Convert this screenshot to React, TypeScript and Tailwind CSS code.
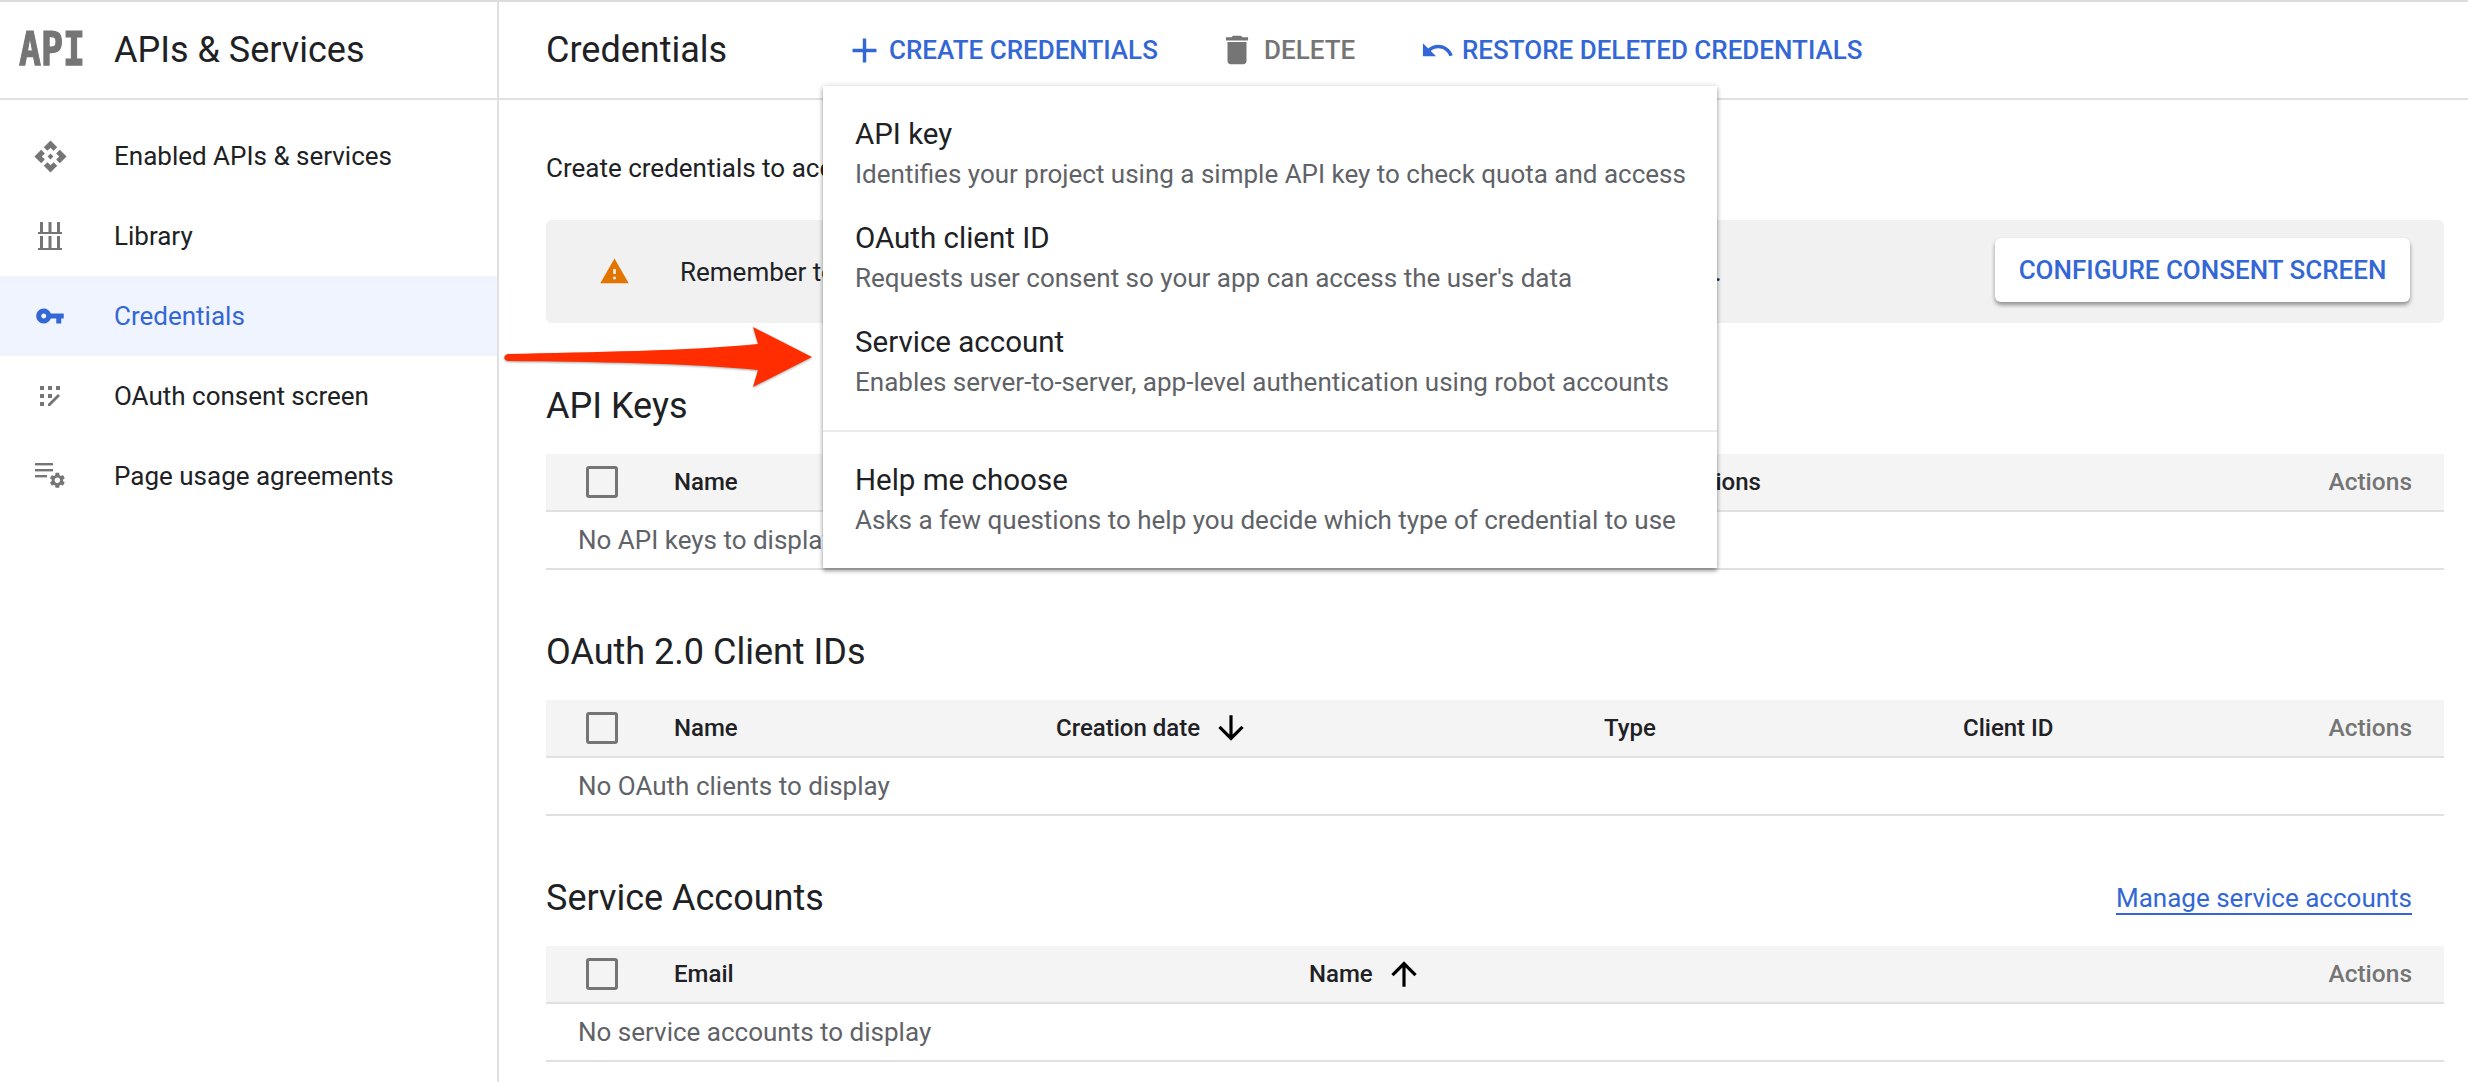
import type { ReactNode } from "react";

const BLUE = "text-[#3367d6]";

function Mi({ d, size, className }: { d: string; size: number; className?: string }) {
  return (
    <svg width={size} height={size} viewBox="0 0 24 24" fill="currentColor" className={className}>
      <path d={d} />
    </svg>
  );
}

const ICONS = {
  api: "M14 12l-2 2-2-2 2-2 2 2zm-2-6l2.12 2.12 2.5-2.5L12 1 7.38 5.62l2.5 2.5L12 6zm-6 6l2.12-2.12-2.5-2.5L1 12l4.62 4.62 2.5-2.5L6 12zm12 0l-2.12 2.12 2.5 2.5L23 12l-4.62-4.62-2.5 2.5L18 12zm-6 6l-2.12-2.12-2.5 2.5L12 23l4.62-4.62-2.5-2.5L12 18z",
  key: "M12.65 10C11.83 7.67 9.61 6 7 6c-3.31 0-6 2.69-6 6s2.69 6 6 6c2.61 0 4.83-1.67 5.65-4H17v4h4v-4h2v-4H12.65zM7 14c-1.1 0-2-.9-2-2s.9-2 2-2 2 .9 2 2-.9 2-2 2z",
  add: "M19 13h-6v6h-2v-6H5v-2h6V5h2v6h6v2z",
  trash: "M6 19c0 1.1.9 2 2 2h8c1.1 0 2-.9 2-2V7H6v12zM19 4h-3.5l-1-1h-5l-1 1H5v2h14V4z",
  undo: "M12.5 8c-2.65 0-5.05.99-6.9 2.6L2 7v9h9l-3.62-3.62c1.39-1.16 3.16-1.88 5.12-1.88 3.54 0 6.55 2.31 7.6 5.5l2.37-.78C21.08 11.03 17.15 8 12.5 8z",
  warning: "M1 21h22L12 2 1 21zm12-3h-2v-2h2v2zm0-4h-2v-4h2v4z",
  down: "M20 12l-1.41-1.41L13 16.17V4h-2v12.17l-5.58-5.59L4 12l8 8 8-8z",
  up: "M4 12l1.41 1.41L11 7.83V20h2V7.83l5.58 5.59L20 12l-8-8-8 8z",
};

function LibraryIcon() {
  return (
    <svg width="26" height="30" viewBox="0 0 26 30" fill="#757575">
      <rect x="3" y="1" width="3" height="10" />
      <rect x="11.5" y="1" width="3" height="10" />
      <rect x="20" y="1" width="3" height="10" />
      <rect x="1" y="11" width="24" height="2" />
      <rect x="3" y="15" width="3" height="12" />
      <rect x="11.5" y="15" width="3" height="12" />
      <rect x="20" y="15" width="3" height="12" />
      <rect x="1" y="27" width="24" height="2" />
    </svg>
  );
}

function ConsentIcon() {
  return (
    <svg width="24" height="24" viewBox="0 0 24 24" fill="#757575">
      <rect x="2" y="2" width="4" height="4" />
      <rect x="10" y="2" width="4" height="4" />
      <rect x="18" y="2" width="4" height="4" />
      <rect x="2" y="10" width="4" height="4" />
      <rect x="10" y="10" width="4" height="4" />
      <rect x="2" y="18" width="4" height="4" />
      <path d="M10 20l10-10 2 2-10 10h-2z" />
    </svg>
  );
}

function UsageIcon() {
  return (
    <svg width="34" height="26" viewBox="0 0 34 26" fill="#757575">
      <rect x="2" y="0" width="18" height="2.4" />
      <rect x="2" y="6" width="18" height="2.4" />
      <rect x="2" y="12" width="12" height="2.4" />
      <g transform="translate(15 8) scale(0.78)">
        <path d="M19.14 12.94c.04-.3.06-.61.06-.94 0-.32-.02-.64-.07-.94l2.03-1.58c.18-.14.23-.41.12-.61l-1.92-3.32c-.12-.22-.37-.29-.59-.22l-2.39.96c-.5-.38-1.03-.7-1.62-.94l-.36-2.54c-.04-.24-.24-.41-.48-.41h-3.84c-.24 0-.43.17-.47.41l-.36 2.54c-.59.24-1.13.57-1.62.94l-2.39-.96c-.22-.08-.47 0-.59.22L2.74 8.87c-.12.21-.08.47.12.61l2.03 1.58c-.05.3-.09.63-.09.94s.02.64.07.94l-2.03 1.58c-.18.14-.23.41-.12.61l1.92 3.32c.12.22.37.29.59.22l2.39-.96c.5.38 1.03.7 1.62.94l.36 2.54c.05.24.24.41.48.41h3.84c.24 0 .44-.17.47-.41l.36-2.54c.59-.24 1.13-.56 1.62-.94l2.39.96c.22.08.47 0 .59-.22l1.92-3.32c.12-.22.07-.47-.12-.61l-2.01-1.58zM12 15.6c-1.98 0-3.6-1.62-3.6-3.6s1.62-3.6 3.6-3.6 3.6 1.62 3.6 3.6-1.62 3.6-3.6 3.6z" />
      </g>
    </svg>
  );
}

function NavItem({ icon, label, active }: { icon: ReactNode; label: string; active?: boolean }) {
  return (
    <div className={`flex items-center h-[80px] ${active ? "bg-[#f0f4fe] text-[#3367d6]" : "text-[#202124]"}`}>
      <div className="w-[100px] mr-[14px] shrink-0 flex justify-center items-center">{icon}</div>
      <span>{label}</span>
    </div>
  );
}

function Checkbox() {
  return <div className="w-[32px] h-[32px] rounded-[3px] border-[3.5px] border-[#757575]" />;
}

function Table({ cols, head, empty }: { cols: string; head: ReactNode; empty: string }) {
  return (
    <div>
      <div className={`grid ${cols} items-center h-[58px] bg-[#f4f4f4] border-b-2 border-[#e0e0e0] font-medium text-[#202124] text-[24px]`}>
        <div className="pl-[40px]"><Checkbox /></div>
        {head}
        <div className="text-right pr-[32px] text-[#757575] text-[24.5px]">Actions</div>
      </div>
      <div className="h-[58px] pl-[32px] flex items-center border-b-2 border-[#e0e0e0] text-[#5f6368]">{empty}</div>
    </div>
  );
}

function MenuItem({ title, desc }: { title: string; desc: string }) {
  return (
    <div className="h-[104px] pl-[32px] flex flex-col justify-center whitespace-nowrap">
      <div className="text-[#202124] text-[29.5px] leading-[40px]">{title}</div>
      <div className="text-[#5f6368] leading-[40px]">{desc}</div>
    </div>
  );
}

export default function App() {
  return (
    <div className="relative w-[2468px] h-[1082px] overflow-hidden bg-white border-t-2 border-[#dadce0] font-['Roboto',sans-serif] text-[26px] flex">
      <aside className="w-[499px] shrink-0 border-r-2 border-[#e0e0e0]">
        <div className="h-[98px] border-b-2 border-[#e0e0e0] flex items-center">
          <span className="w-[114px] pl-[19px] shrink-0 font-['DejaVu_Sans_Mono',monospace] font-bold text-[36.5px] leading-none text-[#757575] scale-y-125 origin-left [-webkit-text-stroke:1px_#757575]">API</span>
          <span className="text-[#202124] text-[36px]">APIs &amp; Services</span>
        </div>
        <nav className="pt-[16px]">
          <NavItem icon={<Mi d={ICONS.api} size={35} className="text-[#757575]" />} label="Enabled APIs & services" />
          <NavItem icon={<LibraryIcon />} label="Library" />
          <NavItem icon={<Mi d={ICONS.key} size={30} />} label="Credentials" active />
          <NavItem icon={<ConsentIcon />} label="OAuth consent screen" />
          <NavItem icon={<UsageIcon />} label="Page usage agreements" />
        </nav>
      </aside>

      <main className="flex-1 min-w-0">
        <header className="h-[98px] border-b-2 border-[#e0e0e0] flex items-center pl-[47px]">
          <h1 className="w-[298px] shrink-0 text-[#202124] text-[36px] font-normal">Credentials</h1>
          <div className={`flex items-center w-[374px] shrink-0 font-medium ${BLUE}`}>
            <Mi d={ICONS.add} size={41} className="mr-[4px]" />
            <span>CREATE CREDENTIALS</span>
          </div>
          <div className="flex items-center w-[202px] shrink-0 font-medium text-[#757575]">
            <Mi d={ICONS.trash} size={38} className="mr-[8px]" />
            <span>DELETE</span>
          </div>
          <div className={`flex items-center font-medium ${BLUE}`}>
            <Mi d={ICONS.undo} size={35} className="mr-[7px]" />
            <span>RESTORE DELETED CREDENTIALS</span>
          </div>
        </header>

        <div className="pl-[47px] pr-[24px] pt-[52px]">
          <p className="h-[30px] leading-[32px] text-[#202124]">Create credentials to access your enabled APIs. Learn more</p>

          <div className="mt-[38px] h-[103px] rounded-[6px] bg-[#f1f1f1] flex items-center justify-between pl-[53px] pr-[34px]">
            <div className="flex items-center">
              <Mi d={ICONS.warning} size={31} className="text-[#e37400] mr-[50px]" />
              <span className="pt-[2px] text-[#202124] whitespace-nowrap">Remember to configure the OAuth consent screen with information about your application.</span>
            </div>
            <button className={`h-[64px] w-[415px] mb-[3px] rounded-[6px] bg-white font-medium shadow-[0_3px_4px_rgba(0,0,0,0.4)] ${BLUE}`}>
              CONFIGURE CONSENT SCREEN
            </button>
          </div>

          <section className="mt-[60px]">
            <h2 className="h-[44px] mb-[27px] leading-[46px] text-[36px] font-normal text-[#202124]">API Keys</h2>
            <Table
              cols="grid-cols-[128px_492px_466px_1fr_200px]"
              head={<><div>Name</div><div>Creation date</div><div>Restrictions</div></>}
              empty="No API keys to display"
            />
          </section>

          <section className="mt-[59px]">
            <h2 className="h-[44px] mb-[27px] leading-[46px] text-[36px] font-normal text-[#202124]">OAuth 2.0 Client IDs</h2>
            <Table
              cols="grid-cols-[128px_382px_548px_359px_1fr_200px]"
              head={
                <>
                  <div>Name</div>
                  <div className="flex items-center">Creation date<Mi d={ICONS.down} size={38} className="ml-[12px] text-black" /></div>
                  <div>Type</div>
                  <div>Client ID</div>
                </>
              }
              empty="No OAuth clients to display"
            />
          </section>

          <section className="mt-[59px]">
            <div className="h-[44px] mb-[27px] flex items-center justify-between pr-[32px]">
              <h2 className="h-[44px] leading-[46px] text-[36px] font-normal text-[#202124]">Service Accounts</h2>
              <a className={`mt-[3px] leading-[30px] border-b-2 border-[#3367d6] ${BLUE}`}>Manage service accounts</a>
            </div>
            <Table
              cols="grid-cols-[128px_635px_1fr_200px]"
              head={
                <>
                  <div>Email</div>
                  <div className="flex items-center">Name<Mi d={ICONS.up} size={38} className="ml-[12px] text-black" /></div>
                </>
              }
              empty="No service accounts to display"
            />
          </section>
        </div>
      </main>

      <svg className="absolute left-[500px] top-[320px] drop-shadow-[0_1px_1px_rgba(0,0,0,0.35)]" width="320" height="70" viewBox="0 0 320 70">
        <path
          d="M8 32 C90 30 190 29 258 22 L253 5 L312 35 L253 65 L258 48 C190 41 90 40 8 39 C3 38 3 33 8 32 Z"
          fill="#ff2d00"
        />
      </svg>

      <div className="absolute left-[823px] top-[84px] w-[894px] h-[482px] bg-white pt-[16px] shadow-[0_3px_4px_rgba(0,0,0,0.35),0_0_6px_rgba(0,0,0,0.15)]">
        <MenuItem title="API key" desc="Identifies your project using a simple API key to check quota and access" />
        <MenuItem title="OAuth client ID" desc="Requests user consent so your app can access the user's data" />
        <MenuItem title="Service account" desc="Enables server-to-server, app-level authentication using robot accounts" />
        <div className="mt-[16px] mb-[16px] h-[2px] bg-[#ebebeb]" />
        <MenuItem title="Help me choose" desc="Asks a few questions to help you decide which type of credential to use" />
      </div>
    </div>
  );
}
